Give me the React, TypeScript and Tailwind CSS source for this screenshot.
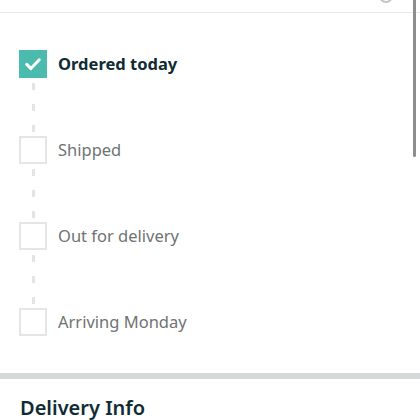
import { Fragment } from 'react'

// Tracking steps for the order
const steps = [
  { label: 'Ordered today', done: true },
  { label: 'Shipped', done: false },
  { label: 'Out for delivery', done: false },
  { label: 'Arriving Monday', done: false },
]

function StepBox({ done }: { done: boolean }) {
  if (done) {
    return (
      <div className="w-[28px] h-[28px] bg-[#4bbbae] flex items-center justify-center shrink-0">
        <svg width="20" height="20" viewBox="0 0 24 24" fill="none">
          <path d="M4.5 12.5l5 5L19.5 7" stroke="white" strokeWidth="3.6" strokeLinecap="round" strokeLinejoin="round" />
        </svg>
      </div>
    )
  }
  return <div className="w-[28px] h-[28px] border-2 border-[#e4e6e6] shrink-0" />
}

function Connector() {
  return (
    <div className="w-[28px] flex flex-col items-center gap-[14px] pt-[5px] pb-[4px]">
      <div className="w-[3px] h-[7px] bg-[#e3e5e5]" />
      <div className="w-[3px] h-[7px] bg-[#e3e5e5]" />
      <div className="w-[3px] h-[7px] bg-[#e3e5e5]" />
    </div>
  )
}

export default function App() {
  return (
    <div className="relative w-[420px] h-[420px] bg-white overflow-hidden font-['Noto_Sans',_'Open_Sans',_sans-serif]">
      {/* header edge */}
      <div className="h-[13px] border-b border-[#e8e8e8]" />
      <div className="absolute left-[379px] top-[-11px] w-[14px] h-[14px] rounded-full border-2 border-[#c4c4c4]" />

      {/* scrollbar */}
      <div className="absolute right-[4px] top-0 w-[3px] h-[157px] bg-[#8e8e8e] rounded-b-sm" />

      <div className="pl-[19px] pt-[37px] pb-[37px]">
        {steps.map((step, i) => (
          <Fragment key={step.label}>
            <div className="flex items-center gap-[11px] h-[28px]">
              <StepBox done={step.done} />
              <span
                className={
                  step.done
                    ? 'text-[16.5px] font-bold text-[#0f2b33]'
                    : 'text-[16.5px] text-[#6e7373]'
                }
              >
                {step.label}
              </span>
            </div>
            {i < steps.length - 1 && <Connector />}
          </Fragment>
        ))}
      </div>

      <div className="h-[6px] bg-[#d5d9d9]" />

      <div className="px-[20px] pt-[14px]">
        <h2 className="text-[20px] font-semibold text-[#0f2b33]">Delivery Info</h2>
      </div>
    </div>
  )
}
